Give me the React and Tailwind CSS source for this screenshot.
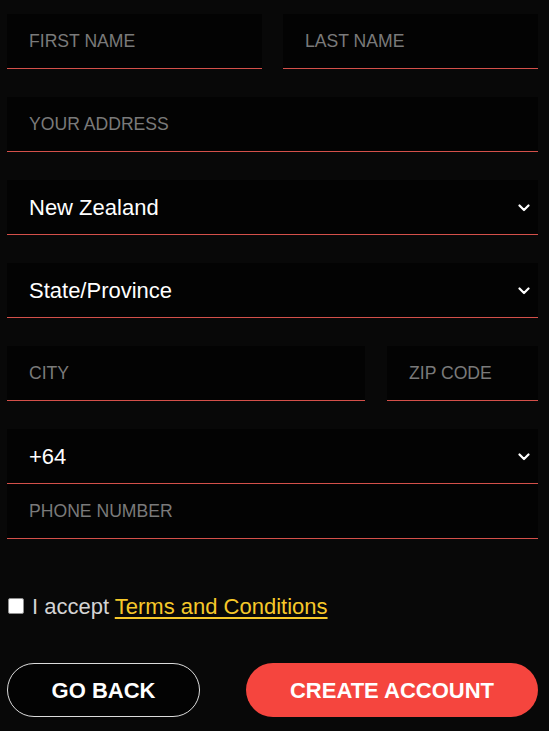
import React from 'react'

const field =
  'h-[55px] w-full bg-[#030303] border-b border-[#d4504a] pl-[22px] pr-3 text-[17.6px] text-white placeholder:text-[#7a7a7a] outline-none'

function Chevron() {
  return (
    <svg
      width="12"
      height="8"
      viewBox="0 0 12 8"
      className="pointer-events-none absolute right-[8px] top-1/2 -translate-y-1/2"
    >
      <polyline
        points="1.5,1.5 6,6 10.5,1.5"
        fill="none"
        stroke="#ffffff"
        strokeWidth="2.2"
        strokeLinecap="round"
        strokeLinejoin="round"
      />
    </svg>
  )
}

function Select({ value }) {
  return (
    <div className="relative">
      <select
        defaultValue={value}
        className="h-[55px] w-full appearance-none bg-[#030303] border-b border-[#d4504a] pl-[22px] pr-8 text-[22px] text-white outline-none"
      >
        <option value={value}>{value}</option>
      </select>
      <Chevron />
    </div>
  )
}

export default function App() {
  return (
    <div
      className="min-h-[731px] w-[549px] bg-[#080808] pl-[7px] pr-[11px] pt-[14px] pb-[13px]"
      style={{ fontFamily: '"Liberation Sans", Arial, sans-serif' }}
    >
      <div className="flex flex-col gap-[28px]">
        <div className="grid grid-cols-2 gap-[21px]">
          <input className={field} placeholder="FIRST NAME" />
          <input className={field} placeholder="LAST NAME" />
        </div>
        <input className={field} placeholder="YOUR ADDRESS" />
        <Select value="New Zealand" />
        <Select value="State/Province" />
        <div className="flex gap-[22px]">
          <input className={field + ' flex-1'} placeholder="CITY" />
          <input className={field + ' !w-[151px] shrink-0'} placeholder="ZIP CODE" />
        </div>
        <div className="flex flex-col">
          <Select value="+64" />
          <input className={field} placeholder="PHONE NUMBER" />
        </div>
      </div>

      <label className="mt-[55px] flex h-[24px] items-center text-[22px] text-[#d4d4d4]">
        <input
          type="checkbox"
          className="ml-[1px] mr-[8px] h-[16px] w-[16px] appearance-none rounded-[2px] border border-[#8f8f8f] bg-white"
        />
        <span>
          I accept{' '}
          <a href="#" className="text-[#f6c82a] underline underline-offset-[3px]">
            Terms and Conditions
          </a>
        </span>
      </label>

      <div className="mt-[45px] flex gap-[46px]">
        <button className="h-[54px] w-[193px] rounded-full border border-[#dcdcdc] bg-[#030303] text-[22px] font-bold text-white">
          GO BACK
        </button>
        <button className="h-[54px] flex-1 rounded-full bg-[#f5453e] text-[22px] font-bold text-white">
          CREATE ACCOUNT
        </button>
      </div>
    </div>
  )
}
